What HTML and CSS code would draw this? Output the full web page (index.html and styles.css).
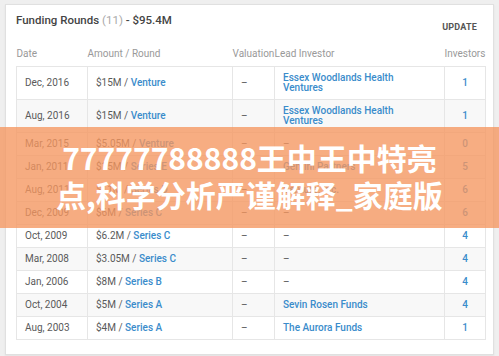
FILE: index.html
```html
<!DOCTYPE html>
<html lang="en">
<head>
<meta charset="utf-8">
<title>Funding Rounds</title>
<link rel="stylesheet" href="styles.css">
</head>
<body>
<div class="card">
  <div class="card-head">
    <h2 class="title">Funding Rounds <span class="count">(11)</span> - $95.4M</h2>
    <span class="update">UPDATE</span>
  </div>
  <table class="rounds">
    <colgroup>
      <col class="c-date"><col class="c-amount"><col class="c-val"><col class="c-lead"><col class="c-inv">
    </colgroup>
    <thead>
      <tr><th>Date</th><th>Amount / Round</th><th>Valuation</th><th>Lead Investor</th><th class="num">Investors</th></tr>
    </thead>
    <tbody>
      <tr class="tall"><td>Dec, 2016</td><td>$15M / <a>Venture</a></td><td>–</td><td class="lead"><a>Essex Woodlands Health<br>Ventures</a></td><td class="num"><a>1</a></td></tr>
      <tr class="tall"><td>Aug, 2016</td><td>$15M / <a>Venture</a></td><td>–</td><td class="lead"><a>Essex Woodlands Health<br>Ventures</a></td><td class="num"><a>1</a></td></tr>
      <tr><td>Mar, 2015</td><td>$5.05M / <a>Venture</a></td><td>–</td><td>–</td><td class="num"><a>0</a></td></tr>
      <tr><td>Jan, 2011</td><td>$15M / <a>Series E</a></td><td>–</td><td><a>Gemini Partners</a></td><td class="num"><a>5</a></td></tr>
      <tr><td>Aug, 2011</td><td>$11M / <a>Series D</a></td><td>–</td><td><a>Venture, Inc.</a></td><td class="num"><a>6</a></td></tr>
      <tr><td>Dec, 2009</td><td>$6M / <a>Series C</a></td><td>–</td><td>–</td><td class="num"><a>6</a></td></tr>
      <tr><td>Oct, 2009</td><td>$6.2M / <a>Series C</a></td><td>–</td><td>–</td><td class="num"><a>4</a></td></tr>
      <tr><td>Mar, 2008</td><td>$3.05M / <a>Series C</a></td><td>–</td><td>–</td><td class="num"><a>4</a></td></tr>
      <tr><td>Jan, 2006</td><td>$8M / <a>Series B</a></td><td>–</td><td>–</td><td class="num"><a>4</a></td></tr>
      <tr><td>Oct, 2004</td><td>$5M / <a>Series A</a></td><td>–</td><td><a>Sevin Rosen Funds</a></td><td class="num"><a>4</a></td></tr>
      <tr><td>Aug, 2003</td><td>$4M / <a>Series A</a></td><td>–</td><td><a>The Aurora Funds</a></td><td class="num"><a>1</a></td></tr>
    </tbody>
  </table>
</div>
<div class="banner">
  <p class="banner-text">77777788888王中王中特亮点,科学分析严谨解释_家庭版</p>
</div>
</body>
</html>
```
FILE: styles.css
```css
html, body {
  margin: 0;
  padding: 0;
}
body {
  background: #efefef;
  font-family: Roboto, "Noto Sans", Arial, sans-serif;
  color: #555;
  padding: 4px 5px 5px 5px;
}
.card {
  background: #fff;
  border: 1px solid #e0e0e0;
  padding: 7px 8px 14px 10px;
  box-shadow: 0 1px 2px rgba(0,0,0,0.06);
}
.card-head {
  display: flex;
  justify-content: space-between;
  align-items: flex-start;
}
.title {
  margin: 0;
  font-size: 11.5px;
  line-height: 16px;
  font-weight: 500;
  color: #444;
}
.count {
  color: #aaa;
  font-weight: 400;
}
.update {
  margin-top: 10px;
  margin-right: 8px;
  font-size: 9px;
  line-height: 11px;
  font-weight: 700;
  color: #555;
  letter-spacing: 0.2px;
}
.rounds {
  width: 469px;
  margin-top: 14px;
  border-collapse: collapse;
  table-layout: fixed;
  font-size: 10px;
}
.c-date { width: 71px; }
.c-amount { width: 145px; }
.c-val { width: 42px; }
.c-lead { width: 170px; }
.c-inv { width: 41px; }
.rounds th {
  text-align: left;
  font-weight: 400;
  color: #999;
  padding: 0 0 5px 0;
  line-height: 14px;
  white-space: nowrap;
  overflow: visible;
}
.rounds td {
  border: 1px solid #e6e6e6;
  padding: 4px 8px;
  line-height: 14px;
  white-space: nowrap;
  color: #5a5a5a;
  vertical-align: middle;
}
.rounds tbody tr:nth-child(even) td {
  background: #f8f8f8;
}
.rounds td.num {
  text-align: center;
  padding-left: 0;
  padding-right: 0;
}
.rounds tr.tall td {
  height: 22px;
  padding-top: 5px;
  padding-bottom: 5px;
}
.rounds td.lead {
  line-height: 10px;
}
.rounds a {
  color: #3a8ccb;
  font-weight: 500;
  text-decoration: none;
}
.banner {
  position: absolute;
  left: 0;
  right: 0;
  top: 127px;
  height: 101px;
  background: rgba(245, 150, 95, 0.78);
  display: flex;
  align-items: center;
  justify-content: center;
}
.banner-text {
  margin: -3px 0 0 0;
  width: 400px;
  text-align: center;
  font-family: "Noto Sans CJK SC", "Noto Sans", sans-serif;
  font-weight: 700;
  font-size: 30px;
  line-height: 37px;
  color: #fff;
  word-break: break-all;
}
```
